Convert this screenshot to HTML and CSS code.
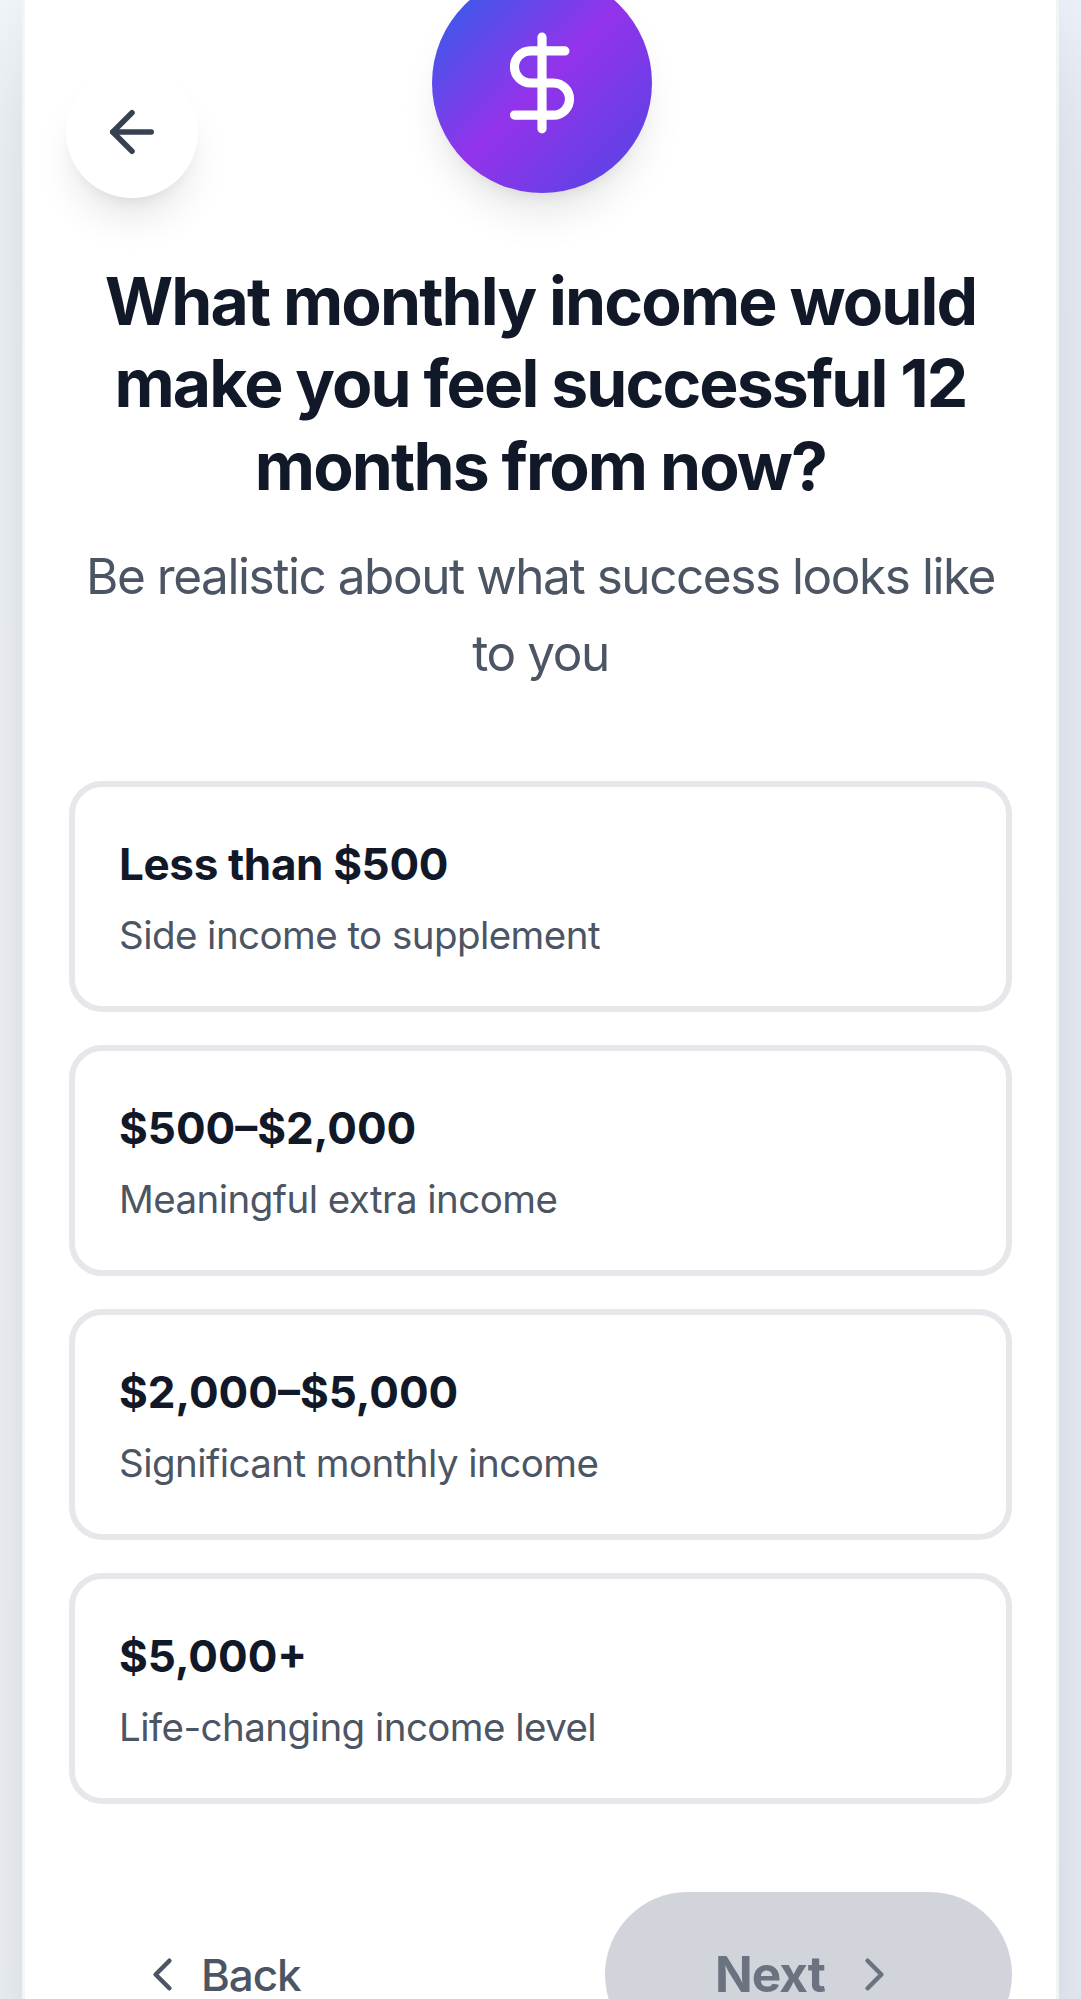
FILE: index.html
```html
<!DOCTYPE html>
<html lang="en">
<head>
<meta charset="utf-8">
<title>Monthly income goal</title>
<link rel="stylesheet" href="styles.css">
</head>
<body>
<main class="panel">
  <button class="back-circle" aria-label="Go back">
    <svg class="icon-arrow" viewBox="0 0 24 24"><path d="m12 19-7-7 7-7"/><path d="M19 12H5"/></svg>
  </button>
  <div class="badge">
    <svg class="icon-dollar" viewBox="0 0 24 24"><path d="M12 2v20"/><path d="M17 5H9.5a3.5 3.5 0 0 0 0 7h5a3.5 3.5 0 0 1 0 7H6"/></svg>
  </div>
  <h1 class="title">What monthly income would<br>make you feel successful 12<br>months from now?</h1>
  <p class="subtitle">Be realistic about what success looks like<br>to you</p>
  <div class="options">
    <button class="option"><span class="option-title option-title-words">Less than $500</span><span class="option-text">Side income to supplement</span></button>
    <button class="option"><span class="option-title">$500–$2,000</span><span class="option-text">Meaningful extra income</span></button>
    <button class="option"><span class="option-title">$2,000–$5,000</span><span class="option-text">Significant monthly income</span></button>
    <button class="option"><span class="option-title">$5,000+</span><span class="option-text">Life-changing income level</span></button>
  </div>
  <div class="actions">
    <button class="back"><svg class="icon-chevron" viewBox="0 0 24 24"><path d="m15 18-6-6 6-6"/></svg><span class="back-label">Back</span></button>
    <button class="next"><span class="next-label">Next</span><svg class="icon-chevron" viewBox="0 0 24 24"><path d="m9 18 6-6-6-6"/></svg></button>
  </div>
</main>
</body>
</html>
```
FILE: styles.css
```css
* { box-sizing: border-box; margin: 0; }

html { height: 1999px; overflow: hidden; }

body {
  height: 1999px;
  overflow: hidden;
  padding: 0 22px;
  background: linear-gradient(95deg, #f5f9fc, #eef4fc);
  font-family: Inter, "Liberation Sans", sans-serif;
  color: #111827;
}

button {
  font: inherit;
  color: inherit;
  background: none;
  border: 0;
  padding: 0;
}

svg {
  fill: none;
  stroke: currentColor;
  stroke-width: 2;
  stroke-linecap: round;
  stroke-linejoin: round;
  flex: none;
}

.panel {
  position: relative;
  height: 2200px;
  margin-top: -74.5px;
  padding: 44px 44px 0;
  border: 3px solid #f3f4f6;
  background: #fff;
  box-shadow: 0 68.75px 137.5px -33px rgba(0, 0, 0, .25);
}

.back-circle {
  position: absolute;
  left: 41.25px;
  top: 137.5px;
  width: 132px;
  height: 132px;
  border-radius: 50%;
  background: #fff;
  color: #374151;
  display: flex;
  align-items: center;
  justify-content: center;
  box-shadow: 0 27.5px 41.25px -8.25px rgba(0, 0, 0, .1), 0 11px 16.5px -11px rgba(0, 0, 0, .1);
}
.icon-arrow { width: 66px; height: 66px; }

.badge {
  width: 220px;
  height: 220px;
  margin: 0 0 0 363px;
  border-radius: 50%;
  background: linear-gradient(135deg, #2563eb, #9333ea 50%, #4f46e5);
  color: #fff;
  display: flex;
  align-items: center;
  justify-content: center;
  box-shadow: 0 27.5px 41.25px -8.25px rgba(0, 0, 0, .1), 0 11px 16.5px -11px rgba(0, 0, 0, .1);
}
.icon-dollar { width: 110px; height: 110px; }

.title {
  margin-top: 67px;
  font-size: 66px;
  font-weight: 700;
  line-height: 82.5px;
  letter-spacing: -1.88px;
  text-align: center;
  white-space: nowrap;
}

.subtitle {
  margin-top: 31px;
  font-size: 49.5px;
  line-height: 77px;
  letter-spacing: -1.45px;
  color: #4b5563;
  text-align: center;
  white-space: nowrap;
}

.options {
  margin-top: 89px;
  display: grid;
  gap: 33px;
}
.option {
  height: 231px;
  padding: 43.5px 44px;
  border: 6px solid #e5e7eb;
  border-radius: 33px;
  background: #fff;
  text-align: left;
  display: flex;
  flex-direction: column;
  gap: 11px;
}
.option-title { font-size: 44px; line-height: 66px; font-weight: 700; }
.option-title-words { letter-spacing: -.36px; }
.option-text { font-size: 38.5px; line-height: 55px; letter-spacing: -.55px; color: #4b5563; }

.actions {
  margin-top: 88px;
  display: flex;
  justify-content: space-between;
  align-items: center;
}
.icon-chevron { width: 55px; height: 55px; }
.back {
  padding-left: 66px;
  display: flex;
  align-items: center;
  gap: 11px;
  font-size: 44px;
  line-height: 44px;
  font-weight: 500;
  letter-spacing: -1.1px;
  color: #4b5563;
}
.next {
  width: 407px;
  height: 165px;
  border-radius: 82.5px;
  background: #d1d5db;
  color: #6b7280;
  display: flex;
  align-items: center;
  justify-content: center;
  gap: 22px;
  font-size: 49.5px;
  line-height: 45px;
  font-weight: 700;
  letter-spacing: -.9px;
}
```
